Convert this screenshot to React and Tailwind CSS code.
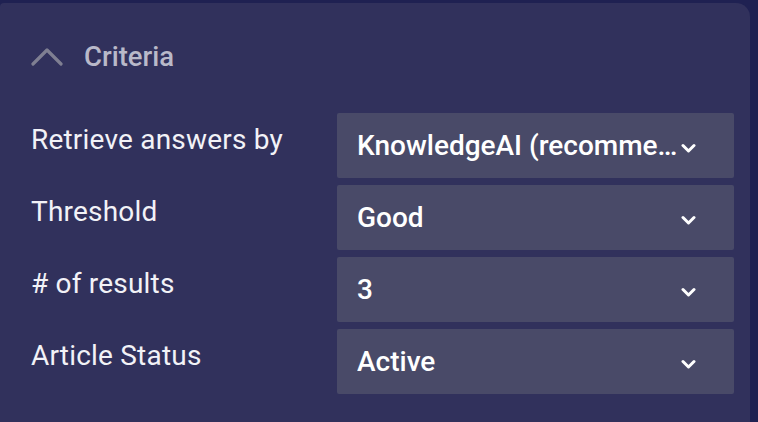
import { useState } from 'react';

const rows = [
    { label: 'Retrieve answers by', value: 'KnowledgeAI (recommended)' },
    { label: 'Threshold', value: 'Good' },
    { label: '# of results', value: '3' },
    { label: 'Article Status', value: 'Active' },
];

const ChevronDown = () => (
    <svg width="15" height="11" viewBox="0 0 15 11" className="shrink-0 mt-[5px]">
        <polyline points="2,2.5 7.5,8 13,2.5" fill="none" stroke="#ffffff" strokeWidth="3" strokeLinecap="round" strokeLinejoin="round" />
    </svg>
);

const ChevronUp = () => (
    <svg width="32" height="20" viewBox="0 0 32 20">
        <polyline points="2,17 16,3 30,17" fill="none" stroke="#7f7f92" strokeWidth="3.2" strokeLinecap="round" strokeLinejoin="round" />
    </svg>
);

export default function App() {
    const [open, setOpen] = useState(true);

    return (
        <div className="w-[758px] h-[422px] overflow-hidden bg-[#1f2152] pt-[3px] font-['Roboto',sans-serif]">
            <div className="w-[750px] h-[440px] bg-[#31315c] rounded-tl-[4px] rounded-tr-[14px] pl-[31px] pr-[16px]">
                <button
                    onClick={() => setOpen(!open)}
                    className="flex items-center gap-[21px] h-[110px] pb-[2px] text-[#b9b9c9] text-[27.5px] font-medium cursor-pointer"
                >
                    <ChevronUp />
                    <span>Criteria</span>
                </button>
                {open && (
                    <div className="flex flex-col gap-[7px]">
                        {rows.map((r) => (
                            <div key={r.label} className="flex">
                                <div className="w-[306px] shrink-0 pt-[9px] text-[28px] tracking-[0.2px] leading-[36px] text-[#f2f2f7]">{r.label}</div>
                                <div className="flex-1 min-w-0 h-[65px] bg-[#494a68] rounded-[2px] flex items-center pl-[20px] pr-[38px] gap-[1px]">
                                    <span className="flex-1 min-w-0 truncate text-[28px] font-medium text-white">{r.value}</span>
                                    <ChevronDown />
                                </div>
                            </div>
                        ))}
                    </div>
                )}
            </div>
        </div>
    );
}
